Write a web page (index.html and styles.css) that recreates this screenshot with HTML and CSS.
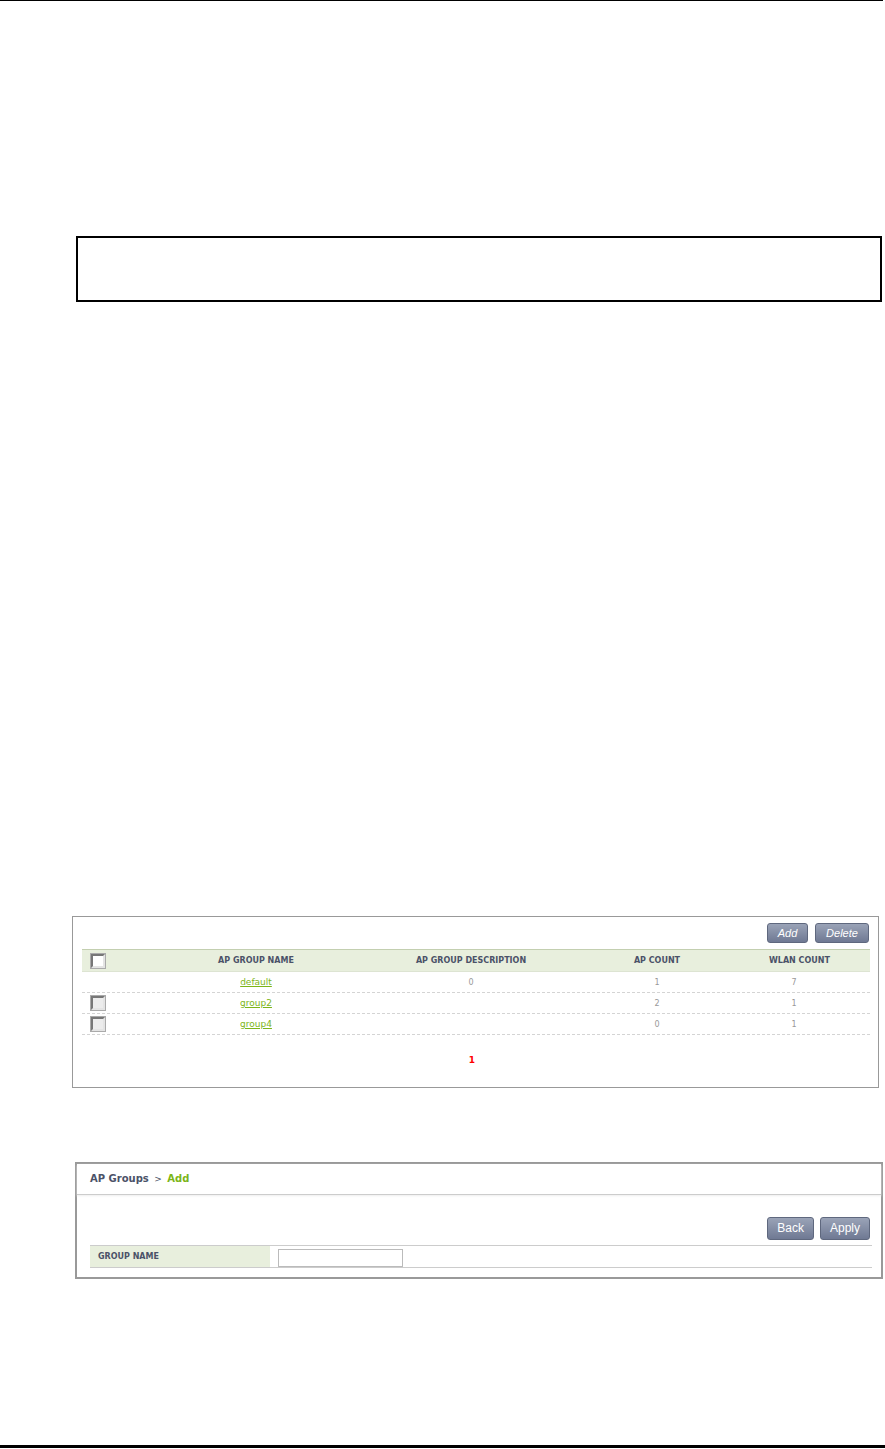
FILE: index.html
```html
<!DOCTYPE html>
<html lang="en">
<head>
  <meta charset="UTF-8">
  <title>AP Groups</title>
  <link rel="stylesheet" href="styles.css">
</head>
<body>

  <div class="rule-top"></div>

  <div class="note"></div>

  <!-- AP group list -->
  <div class="shot shot-list">
    <div class="toolbar">
      <button class="btn btn-italic" type="button">Add</button>
      <button class="btn btn-italic" type="button">Delete</button>
    </div>

    <div class="grid">
      <div class="row row-head">
        <div class="cell"><span class="check"></span></div>
        <div class="cell">AP GROUP NAME</div>
        <div class="cell">AP GROUP DESCRIPTION</div>
        <div class="cell">AP COUNT</div>
        <div class="cell">WLAN COUNT</div>
        <div class="cell"></div>
      </div>
      <div class="row">
        <div class="cell"></div>
        <div class="cell"><a href="#">default</a></div>
        <div class="cell num">0</div>
        <div class="cell num">1</div>
        <div class="cell num">7</div>
        <div class="cell"></div>
      </div>
      <div class="row">
        <div class="cell"><span class="check check-row"></span></div>
        <div class="cell"><a href="#">group2</a></div>
        <div class="cell num"></div>
        <div class="cell num">2</div>
        <div class="cell num">1</div>
        <div class="cell"></div>
      </div>
      <div class="row">
        <div class="cell"><span class="check check-row"></span></div>
        <div class="cell"><a href="#">group4</a></div>
        <div class="cell num"></div>
        <div class="cell num">0</div>
        <div class="cell num">1</div>
        <div class="cell"></div>
      </div>
    </div>

    <div class="pager">1</div>
  </div>

  <!-- AP group add form -->
  <div class="shot shot-form">
    <div class="crumb">AP Groups <span class="crumb-sep">&gt;</span> <span class="crumb-here">Add</span></div>
    <div class="form-body">
      <div class="toolbar toolbar-form">
        <button class="btn" type="button">Back</button>
        <button class="btn" type="button">Apply</button>
      </div>
      <div class="field">
        <div class="field-label">GROUP NAME</div>
        <div class="field-value"><input type="text" aria-label="Group name"></div>
      </div>
    </div>
  </div>

  <div class="rule-bottom"></div>

</body>
</html>
```

FILE: styles.css
```css
body {
  margin: 0;
  background-color: #fff;
  font-family: "DejaVu Sans", Verdana, sans-serif;
  color: #4b5268;
}

.rule-top {
  height: 1px;
  margin-right: 2px;
  background-color: #000;
}

.note {
  height: 62px;
  margin: 235px 3px 0 76px;
  border: 2px solid #000;
}

/* screenshots */
.shot {
  background-color: #fff;
}

.shot-list {
  height: 172px;
  margin: 614px 6px 0 72px;
  border: 1px solid #999;
  padding: 6px 8px 0 9px;
  box-sizing: border-box;
}

.toolbar {
  display: flex;
  justify-content: flex-end;
  gap: 7px;
  padding-right: 1px;
  height: 26px;
}

.btn {
  height: 20px;
  padding: 0 8px;
  border: 1px solid #5f687e;
  border-radius: 3px;
  background: linear-gradient(#9aa3b7, #6f7993);
  color: #fff;
  font-family: "Liberation Sans", Arial, sans-serif;
  font-size: 11px;
  line-height: 18px;
  cursor: pointer;
}

.btn-italic {
  font-style: italic;
  min-width: 41px;
}

.btn-italic + .btn-italic {
  min-width: 54px;
}

.grid {
  display: flex;
  flex-direction: column;
}

.row {
  display: grid;
  grid-template-columns: 33px 282px 148px 224px 50px 1fr;
  height: 21px;
  align-items: center;
  border-bottom: 1px dashed #d4d4d4;
  box-sizing: border-box;
  font-size: 8px;
}

.row-head {
  height: 23px;
  border-top: 1px solid #c3cfb0;
  border-bottom: 1px solid #dde4d2;
  background-color: #e8efdd;
  font-weight: bold;
  color: #4b5268;
}

.cell {
  text-align: center;
  white-space: nowrap;
}

.cell:first-child {
  text-align: left;
  padding-left: 9px;
  display: flex;
}

.num {
  color: #999;
}

.cell a {
  color: #7cb518;
  font-size: 9px;
}

.check {
  width: 10px;
  height: 10px;
  border: 2px solid;
  border-color: #777 #e4e4e4 #e4e4e4 #777;
  outline: 1px solid #aaa;
  background-color: #fff;
}

.check-row {
  background-color: #ececec;
}

.pager {
  margin-top: 20px;
  padding-right: 8px;
  text-align: center;
  color: #f00;
  font-weight: bold;
  font-size: 9px;
}

/* add form */
.shot-form {
  height: 117px;
  margin: 74px 2px 0 75px;
  border: 2px solid #999;
  box-sizing: border-box;
}

.crumb {
  height: 30px;
  padding-left: 13px;
  border-bottom: 1px solid #ccc;
  box-shadow: 0 1px 2px #eee;
  font-size: 10px;
  font-weight: bold;
  line-height: 30px;
  color: #4b5268;
}

.crumb-sep {
  margin: 0 2px;
  font-weight: normal;
  font-size: 9px;
}

.crumb-here {
  color: #7cb518;
}

.form-body {
  padding: 22px 9px 0 13px;
}

.toolbar-form {
  height: 28px;
  gap: 6px;
  padding-right: 2px;
}

.toolbar-form .btn {
  height: 23px;
  font-size: 12px;
  line-height: 21px;
  padding: 0 9px;
  min-width: 45px;
}

.field {
  display: flex;
  height: 23px;
  border-top: 1px solid #ccc;
  border-bottom: 1px solid #ccc;
  box-sizing: border-box;
}

.field-label {
  width: 172px;
  padding-left: 8px;
  background-color: #e8efdd;
  font-size: 8px;
  font-weight: bold;
  line-height: 21px;
}

.field-value {
  padding: 1px 0 0 8px;
}

.field-value input {
  width: 125px;
  height: 18px;
  box-sizing: border-box;
  border: 1px solid #bbb;
  margin: 0;
  padding: 0 3px;
}

.rule-bottom {
  height: 3px;
  margin-top: 166px;
  background-color: #000;
}
```
